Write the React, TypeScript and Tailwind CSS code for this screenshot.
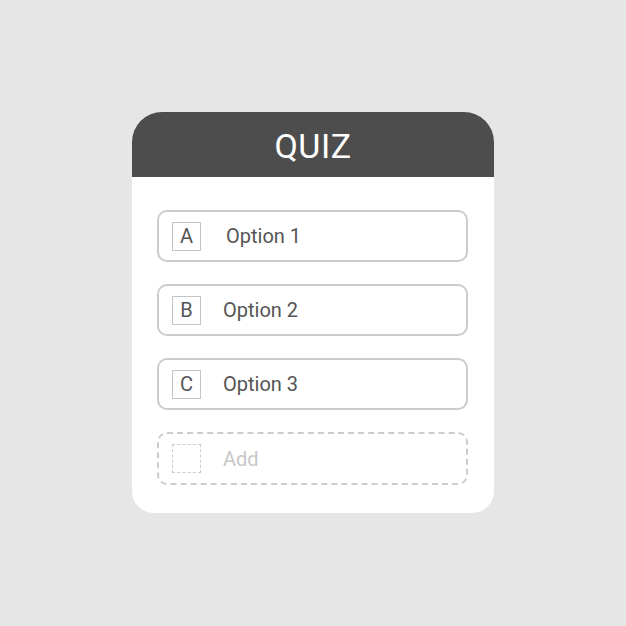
import React from "react";

const options = [
  { letter: "A", label: "Option 1", ml: "ml-[25px]" },
  { letter: "B", label: "Option 2", ml: "ml-[22px]" },
  { letter: "C", label: "Option 3", ml: "ml-[22px]" },
];

export default function App() {
  return (
    <div
      className="w-[626px] h-[626px] bg-[#e6e6e6] flex items-start justify-center pt-[112px]"
      style={{ fontFamily: "Roboto, 'Liberation Sans', sans-serif" }}
    >
      <div className="w-[362px] bg-white rounded-t-[30px] rounded-b-[22px] overflow-hidden">
        <div className="h-[65px] bg-[#4d4d4d] flex items-center justify-center">
          <span className="text-white text-[34px] leading-none tracking-[0.5px] mt-[2px]">QUIZ</span>
        </div>
        <div className="pt-[33px] pb-[28px] pl-[25px] pr-[26px] flex flex-col gap-[22px]">
          {options.map((o) => (
            <div
              key={o.letter}
              className="h-[52px] border-2 border-[#cccccc] rounded-[10px] flex items-center pl-[13px]"
            >
              <div className="w-[29px] h-[29px] border-[1.5px] border-[#c4c4c4] flex items-center justify-center text-[20px] text-[#555555] leading-none">
                {o.letter}
              </div>
              <span className={`${o.ml} text-[20px] text-[#555555] leading-none`}>{o.label}</span>
            </div>
          ))}
          <div className="h-[53px] border-2 border-dashed border-[#cccccc] rounded-[10px] flex items-center pl-[13px]">
            <div className="w-[29px] h-[29px] border-[1.5px] border-dashed border-[#cccccc]" />
            <span className="ml-[22px] text-[20px] text-[#c8c8c8] leading-none">Add</span>
          </div>
        </div>
      </div>
    </div>
  );
}
